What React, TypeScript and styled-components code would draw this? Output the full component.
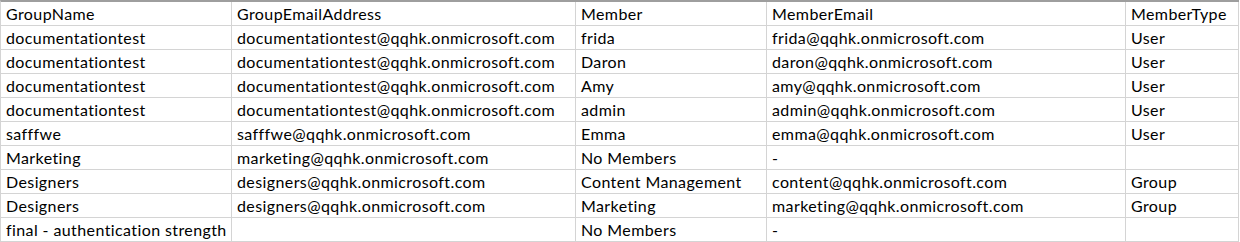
import React from 'react';
import styled, { createGlobalStyle } from 'styled-components';

const GlobalStyle = createGlobalStyle`
  body {
    margin: 0;
    background: #ffffff;
  }
`;

const Sheet = styled.div`
  display: grid;
  grid-template-columns: 231px 344px 191px 359px 113px;
  width: max-content;
  border-left: 1px solid #d4d4d4;
  border-top: 2px solid #9e9e9e;
  font-family: Lato, 'Liberation Sans', sans-serif;
  font-size: 16px;
  letter-spacing: 0.4px;
  color: #000;
`;

const Cell = styled.div`
  box-sizing: border-box;
  height: 24px;
  padding: 0 5px;
  line-height: 23px;
  white-space: nowrap;
  overflow: hidden;
  border-right: 1px solid #d4d4d4;
  border-bottom: 1px solid #d4d4d4;
`;

const headers = ['GroupName', 'GroupEmailAddress', 'Member', 'MemberEmail', 'MemberType'];

const rows: string[][] = [
  ['documentationtest', 'documentationtest@qqhk.onmicrosoft.com', 'frida', 'frida@qqhk.onmicrosoft.com', 'User'],
  ['documentationtest', 'documentationtest@qqhk.onmicrosoft.com', 'Daron', 'daron@qqhk.onmicrosoft.com', 'User'],
  ['documentationtest', 'documentationtest@qqhk.onmicrosoft.com', 'Amy', 'amy@qqhk.onmicrosoft.com', 'User'],
  ['documentationtest', 'documentationtest@qqhk.onmicrosoft.com', 'admin', 'admin@qqhk.onmicrosoft.com', 'User'],
  ['safffwe', 'safffwe@qqhk.onmicrosoft.com', 'Emma', 'emma@qqhk.onmicrosoft.com', 'User'],
  ['Marketing', 'marketing@qqhk.onmicrosoft.com', 'No Members', '-', ''],
  ['Designers', 'designers@qqhk.onmicrosoft.com', 'Content Management', 'content@qqhk.onmicrosoft.com', 'Group'],
  ['Designers', 'designers@qqhk.onmicrosoft.com', 'Marketing', 'marketing@qqhk.onmicrosoft.com', 'Group'],
  ['final - authentication strength', '', 'No Members', '-', ''],
];

const App = () => {
  return (
    <>
      <GlobalStyle />
      <Sheet>
        {headers.map(h => (
          <Cell key={h}>{h}</Cell>
        ))}
        {rows.map((row, i) =>
          row.map((value, j) => <Cell key={`${i}-${j}`}>{value}</Cell>),
        )}
      </Sheet>
    </>
  );
};

export default App;
